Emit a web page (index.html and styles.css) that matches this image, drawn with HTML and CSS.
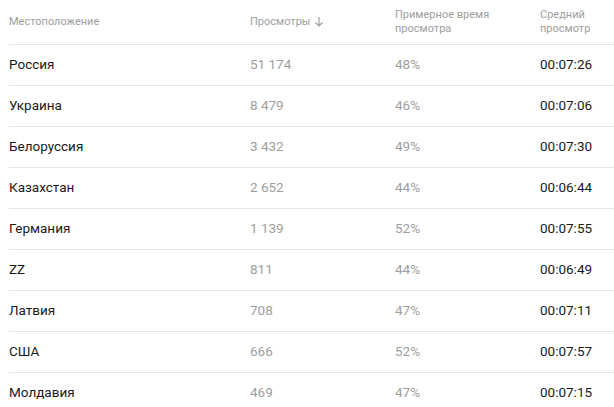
FILE: index.html
```html
<!DOCTYPE html>
<html lang="ru">
<head>
<meta charset="utf-8">
<link rel="stylesheet" href="styles.css">
</head>
<body>
<div class="table">
  <div class="row head">
    <div class="c c1">Местоположение</div>
    <div class="c c2">Просмотры <svg class="arrow" width="10" height="12" viewBox="0 0 10 12"><path d="M5 1v9M1.5 6.5L5 10l3.5-3.5" fill="none" stroke="#9e9e9e" stroke-width="1.2"/></svg></div>
    <div class="c c3">Примерное время<br>просмотра</div>
    <div class="c c4">Средний<br>просмотр</div>
  </div>
  <div class="row"><div class="c c1">Россия</div><div class="c c2 g">51 174</div><div class="c c3 g">48%</div><div class="c c4">00:07:26</div></div>
  <div class="row"><div class="c c1">Украина</div><div class="c c2 g">8 479</div><div class="c c3 g">46%</div><div class="c c4">00:07:06</div></div>
  <div class="row"><div class="c c1">Белоруссия</div><div class="c c2 g">3 432</div><div class="c c3 g">49%</div><div class="c c4">00:07:30</div></div>
  <div class="row"><div class="c c1">Казахстан</div><div class="c c2 g">2 652</div><div class="c c3 g">44%</div><div class="c c4">00:06:44</div></div>
  <div class="row"><div class="c c1">Германия</div><div class="c c2 g">1 139</div><div class="c c3 g">52%</div><div class="c c4">00:07:55</div></div>
  <div class="row"><div class="c c1">ZZ</div><div class="c c2 g">811</div><div class="c c3 g">44%</div><div class="c c4">00:06:49</div></div>
  <div class="row"><div class="c c1">Латвия</div><div class="c c2 g">708</div><div class="c c3 g">47%</div><div class="c c4">00:07:11</div></div>
  <div class="row"><div class="c c1">США</div><div class="c c2 g">666</div><div class="c c3 g">52%</div><div class="c c4">00:07:57</div></div>
  <div class="row"><div class="c c1">Молдавия</div><div class="c c2 g">469</div><div class="c c3 g">47%</div><div class="c c4">00:07:15</div></div>
</div>
</body>
</html>
```
FILE: styles.css
```css
html, body {
  margin: 0;
  padding: 0;
  background: #fff;
}
body {
  font-family: Roboto, "Noto Sans", sans-serif;
  color: #1a1a1a;
  overflow: hidden;
}
.table {
  padding-left: 9px;
}
.row {
  display: grid;
  grid-template-columns: 241px 145px 145px 1fr;
  align-items: center;
  height: 40px;
  border-bottom: 1px solid #e5e5e5;
  font-size: 13.5px;
  line-height: 16px;
}
.row > .c {
  padding-bottom: 2px;
}
.row.head {
  height: 44px;
  font-size: 11px;
  line-height: 14px;
  color: #9e9e9e;
}
.row.head > .c {
  padding-bottom: 0;
}
.g {
  color: #9e9e9e;
}
.c2 {
  display: flex;
  align-items: center;
}
.arrow {
  margin-left: 4px;
}
```
